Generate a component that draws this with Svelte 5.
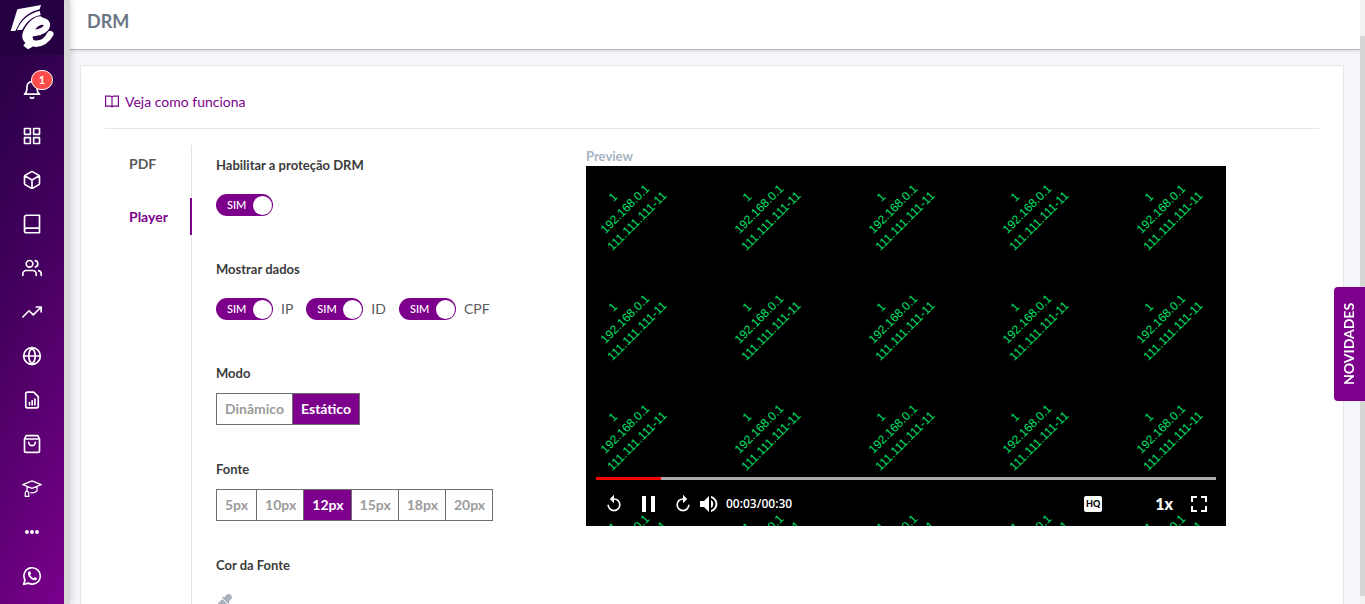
<script lang="ts">
  type Option = { id: string; label: string; checked: boolean };

  const menu = [
    'Painel',
    'Produtos',
    'Cursos',
    'Usuários',
    'Vendas',
    'Site',
    'Relatórios',
    'Loja',
    'Alunos',
    'Mais',
    'WhatsApp',
  ];

  const fontSizes = ['5px', '10px', '12px', '15px', '18px', '20px'];
  const modes = ['Dinâmico', 'Estático'];

  let protection = $state({ checked: true });
  let mode = $state('Estático');
  let fontSize = $state('12px');
  let shown = $state<Option[]>([
    { id: 'ip', label: 'IP', checked: true },
    { id: 'id', label: 'ID', checked: true },
    { id: 'cpf', label: 'CPF', checked: true },
  ]);

  const current = 3;
  const duration = 30;
  const progress = 10.5;

  // watermark grid, one stamp per cell
  const stamps = Array.from({ length: 20 }, (_, i) => ({
    x: 39 + (i % 5) * 134,
    y: 43 + Math.floor(i / 5) * 110,
  }));

  function time(seconds: number) {
    return '00:' + String(seconds).padStart(2, '0');
  }
</script>

{#snippet toggle(id: string, option: { checked: boolean })}
  <span class="switch">
    <input type="checkbox" {id} bind:checked={option.checked} />
    <span class="track"><span>{option.checked ? 'SIM' : 'NÃO'}</span></span>
  </span>
{/snippet}

<div class="app">
  <nav class="sidebar">
    <a class="logo" href="#inicio" aria-label="Início">
      <svg viewBox="0 0 156 150" width="52" height="50">
        <path d="M34 22 L105 9 L101 22 C75 28 52 43 39 66 L28 87 L14 87 Z" />
        <path d="M101 26 L104 39 C80 43 62 58 48 84 L33 84 C46 52 70 34 101 26 Z" />
        <path d="M52 88 C64 62 84 43 104 43 L128 58 L90 66 L72 98 L80 134 L66 142 L52 131 L58 122 C48 114 46 102 52 88 Z" />
        <path
          class="letter"
          d="M84 93 C106 92 124 80 123 67 C118 54 96 56 82 74 C66 96 66 122 86 125 C106 127 124 114 133 96"
        />
      </svg>
    </a>
    <a class="bell" href="#notificacoes" aria-label="Notificações">
      <svg viewBox="0 0 24 24" width="20" height="20">
        <path d="M18 8A6 6 0 0 0 6 8c0 7-3 9-3 9h18s-3-2-3-9M10 21c1 1.300 3 1.300 4 0" />
      </svg>
      <span class="badge">1</span>
    </a>
    {#each menu as item, i}
      <a href="#{item.toLowerCase()}" aria-label={item}>
        <svg viewBox="0 0 24 24" width="20" height="20">
          {#if i === 0}
            <path d="M3 3h7v7H3zM14 3h7v7h-7zM14 14h7v7h-7zM3 14h7v7H3z" />
          {:else if i === 1}
            <path d="M21 16V8a2 2 0 0 0-1-1.730l-7-4a2 2 0 0 0-2 0l-7 4A2 2 0 0 0 3 8v8a2 2 0 0 0 1 1.730l7 4a2 2 0 0 0 2 0l7-4A2 2 0 0 0 21 16zM3.270 6.960L12 12l8.730-5.040M12 22V12" />
          {:else if i === 2}
            <path d="M3 19.500A2.500 2.500 0 0 1 5.500 17H21M5.500 1.500H21v21H5.500A2.500 2.500 0 0 1 3 20V4a2.500 2.500 0 0 1 2.500-2.500z" />
          {:else if i === 3}
            <path d="M17 21v-2a4 4 0 0 0-4-4H5a4 4 0 0 0-4 4v2M23 21v-2a4 4 0 0 0-3-3.870M16 3.130a4 4 0 0 1 0 7.750" />
            <circle cx="9" cy="7" r="4" />
          {:else if i === 4}
            <path d="M23 6l-9.500 9.500-5-5L1 18M17 6h6v6" />
          {:else if i === 5}
            <circle cx="12" cy="12" r="10" />
            <path d="M2 12h20M12 2a15.300 15.300 0 0 1 4 10 15.300 15.300 0 0 1-4 10 15.300 15.300 0 0 1-4-10 15.300 15.300 0 0 1 4-10z" />
          {:else if i === 6}
            <path d="M14 2.500H6.500a2 2 0 0 0-2 2v15a2 2 0 0 0 2 2h11a2 2 0 0 0 2-2V8zM9 18v-3M12.200 18v-5M15.500 18v-7" />
          {:else if i === 7}
            <path d="M5 2h14l2 4v14a2 2 0 0 1-2 2H5a2 2 0 0 1-2-2V6zM3 6h18M16 10a4 4 0 0 1-8 0" />
          {:else if i === 8}
            <path class="thin" d="M1 8l11-4.500L23 8l-11 4.500zM6 10.500V16M18 10.500v5c-1.500 2-5 2.500-8 2.200M6 15.500c-2 0-2.200 2-2.200 6.500h4.400c0-4.500-.2-6.500-2.200-6.500z" />
          {:else if i === 9}
            <g class="solid">
              <circle cx="6" cy="12" r="2.300" />
              <circle cx="12" cy="12" r="2.300" />
              <circle cx="18" cy="12" r="2.300" />
            </g>
          {:else}
            <path d="M2 22l1.600-5.200a9.800 9.800 0 1 1 3.700 3.700z" />
            <path class="solid" d="M8.500 6.500c-2 1-1.800 3.500-.4 5.700 1.700 2.700 4.400 5 7.200 5 1.500 0 2.700-1 2.700-2.600l-2.800-1.500-1.500 1.500c-1.700-.6-3.200-2.200-3.900-3.700l1.100-1.500-1-2.700c-.3-.4-.9-.4-1.400-.2z" />
          {/if}
        </svg>
      </a>
    {/each}
  </nav>

  <div class="page">
    <header>
      <h1>DRM</h1>
    </header>

    <main>
      <a class="help" href="#como-funciona">
        <svg viewBox="0 0 24 24" width="14" height="14">
          <path d="M1 2h8a3 3 0 0 1 3 3v16a2.500 2.500 0 0 0-2.500-2H1zM23 2h-8a3 3 0 0 0-3 3v16a2.500 2.500 0 0 1 2.500-2H23z" />
        </svg>
        Veja como funciona
      </a>

      <div class="content">
        <nav class="tabs">
          <a href="#pdf">PDF</a>
          <a class="active" href="#player">Player</a>
        </nav>

        <form class="settings">
          <section>
            <h2><label for="drm">Habilitar a proteção DRM</label></h2>
            <div class="switches">
              {@render toggle('drm', protection)}
            </div>
          </section>

          <section>
            <h2>Mostrar dados</h2>
            <div class="switches">
              {#each shown as option}
                {@render toggle(option.id, option)}
                <label for={option.id}>{option.label}</label>
              {/each}
            </div>
          </section>

          <section>
            <h2>Modo</h2>
            <div class="segments">
              {#each modes as item}
                <button type="button" class:selected={mode === item} onclick={() => (mode = item)}>{item}</button>
              {/each}
            </div>
          </section>

          <section>
            <h2>Fonte</h2>
            <div class="segments sizes">
              {#each fontSizes as size}
                <button type="button" class:selected={fontSize === size} onclick={() => (fontSize = size)}>{size}</button>
              {/each}
            </div>
          </section>

          <section>
            <h2>Cor da Fonte</h2>
            <button type="button" class="picker" aria-label="Escolher cor">
              <svg viewBox="0 0 16 16" width="16" height="16">
                <path d="M15 1c-1.400-1.400-3.500-1.200-4.800.2L8.600 3l-.9-.8-1.500 1.500 6 6 1.500-1.500-.8-.9L14.800 5.700c1.400-1.300 1.500-3.400.2-4.700zM6.300 5L2 9.300l-.5 2.700L0 14.500 1.500 16 4 14.500l2.700-.5L11 9.700z" />
              </svg>
            </button>
          </section>
        </form>

        <div class="preview">
          <h3>Preview</h3>
          <div class="player">
            <svg class="watermark" viewBox="0 0 640 360" width="640" height="360">
              {#each stamps as stamp}
                <g transform="translate({stamp.x} {stamp.y}) rotate(-45)">
                  <text y="-13">1</text>
                  <text y="4">192.168.0.1</text>
                  <text y="21">111.111.111-11</text>
                </g>
              {/each}
            </svg>

            <div class="overlay">
              <div class="progress"><div style="width: {progress}%"></div></div>
              <div class="controls">
                <button type="button" aria-label="Voltar">
                  <svg viewBox="0 0 24 24" width="20" height="20">
                    <path d="M12 5V1L7 6l5 5V7a6 6 0 1 1-6 6H4a8 8 0 1 0 8-8z" />
                  </svg>
                </button>
                <button type="button" class="pause" aria-label="Pausar">
                  <svg viewBox="0 0 13 16" width="13" height="16"><path d="M0 0h4v16H0zM9 0h4v16H9z" /></svg>
                </button>
                <button type="button" aria-label="Avançar">
                  <svg viewBox="0 0 24 24" width="20" height="20">
                    <path d="M12 5V1l5 5-5 5V7a6 6 0 1 0 6 6h2a8 8 0 1 1-8-8z" />
                  </svg>
                </button>
                <button type="button" class="volume" aria-label="Volume">
                  <svg viewBox="0 0 18 18" width="18" height="18">
                    <path d="M0 6v6h4l5 5V1L4 6zM11 5v8c3-1.500 3-6.500 0-8zM11 1v2c6 2 6 10 0 12v2c8.500-2.500 8.500-13.500 0-16z" />
                  </svg>
                </button>
                <span class="time">{time(current)}/{time(duration)}</span>
                <button type="button" class="quality" aria-label="Qualidade">HQ</button>
                <button type="button" class="speed">1x</button>
                <button type="button" aria-label="Tela cheia">
                  <svg viewBox="0 0 16 16" width="16" height="16">
                    <path d="M0 0h6v2H2v4H0zM10 0h6v6h-2V2h-4zM0 10h2v4h4v2H0zM14 10h2v6h-6v-2h4z" />
                  </svg>
                </button>
              </div>
            </div>
          </div>
        </div>
      </div>
    </main>
  </div>

  <div class="scrollbar"><div></div></div>
  <button type="button" class="news">NOVIDADES</button>
</div>

<style>
  :global(body) {
    overflow: hidden;
    background: #f4f6fb;
  }

  .app {
    display: flex;
    height: 100vh;
    overflow: hidden;
    font-family: Lato, sans-serif;
    font-size: 14px;
    line-height: 20px;
    color: #5a5a5a;
  }

  .app * {
    box-sizing: border-box;
  }

  a {
    text-decoration: none;
  }

  button {
    padding: 0;
    border: 0;
    background: none;
    font: inherit;
    cursor: pointer;
  }

  h1,
  h2,
  h3 {
    margin: 0;
  }

  svg {
    display: block;
  }

  .sidebar {
    flex: none;
    width: 70px;
    border-right: 6px solid #d9d8d6;
    background: linear-gradient(118deg, #240042 0%, #44005e 45%, #7a008c 100%) padding-box;
    box-shadow: 0 0 8px rgba(0, 0, 0, 0.2);
    z-index: 1;
  }

  .sidebar a {
    position: relative;
    display: flex;
    align-items: center;
    justify-content: center;
    height: 44px;
  }

  .sidebar a.logo {
    height: 55px;
    padding-bottom: 1px;
    background: #240042;
  }

  .sidebar a.bell {
    height: 59px;
    padding-top: 10px;
  }

  .sidebar svg {
    fill: none;
    stroke: #fff;
    stroke-width: 2;
    stroke-linecap: round;
    stroke-linejoin: round;
  }

  .sidebar .logo svg,
  .sidebar .solid {
    fill: #fff;
    stroke: none;
  }

  .sidebar .letter {
    fill: none;
    stroke: #fff;
    stroke-width: 19;
  }

  .sidebar .thin {
    stroke-width: 1.500;
  }

  .badge {
    position: absolute;
    top: 15px;
    left: 31px;
    width: 22px;
    height: 20px;
    border: 1px solid #fff;
    border-radius: 10px;
    background: #ff4b4b;
    color: #fff;
    font-size: 11px;
    font-weight: 700;
    line-height: 18px;
    text-align: center;
  }

  .page {
    flex: 1;
    min-width: 0;
  }

  header {
    height: 50px;
    padding: 9px 17px;
    border-bottom: 1px solid #b4b7ba;
    background: #fff;
    box-shadow: 0 1px 4px rgba(0, 0, 0, 0.12);
  }

  h1 {
    color: #6a7684;
    font-size: 18px;
    font-weight: 700;
    line-height: 24px;
  }

  main {
    margin: 15px 16px 0 10px;
    padding: 24px;
    border: 1px solid #e6e7e9;
    background: #fff;
  }

  .help {
    display: flex;
    align-items: center;
    gap: 6px;
    height: 39px;
    padding-bottom: 14px;
    border-bottom: 1px solid #e6e7e9;
    color: #7c008c;
  }

  .help svg {
    fill: none;
    stroke: #7c008c;
    stroke-width: 2;
  }

  .content {
    display: flex;
    padding-top: 16px;
  }

  .tabs {
    display: flex;
    flex: none;
    flex-direction: column;
    gap: 16px;
    width: 87px;
    border-right: 1px solid #e2e3e5;
  }

  .tabs a {
    height: 37px;
    margin-right: -1px;
    padding-left: 24px;
    color: #5a5a5a;
    font-weight: 700;
    line-height: 38px;
  }

  .tabs .active {
    border-right: 2px solid #7c008c;
    color: #7c008c;
  }

  .settings {
    flex: none;
    width: 394px;
    padding: 10px 0 0 24px;
  }

  section {
    margin-bottom: 34px;
  }

  h2 {
    margin-bottom: 10px;
    color: #3b3b3b;
    font-size: 13px;
    font-weight: 700;
    line-height: 20px;
  }

  .switches {
    display: flex;
    align-items: center;
    height: 40px;
  }

  .switches label {
    padding: 0 13px 0 8px;
  }

  .switch {
    position: relative;
    width: 57px;
    height: 22px;
  }

  .switch input {
    position: absolute;
    inset: 0;
    width: 100%;
    height: 100%;
    margin: 0;
    opacity: 0;
    cursor: pointer;
  }

  .track {
    display: flex;
    align-items: center;
    justify-content: space-between;
    height: 22px;
    padding: 0 1px 0 11px;
    border-radius: 11px;
    background: #7c008c;
    color: #fff;
    font-size: 11px;
    font-weight: 500;
  }

  .track::after {
    content: '';
    width: 19px;
    height: 19px;
    border-radius: 50%;
    background: #fff;
  }

  input:not(:checked) + .track {
    flex-direction: row-reverse;
    padding: 0 8px 0 1px;
    background: #a5adb7;
  }

  .segments {
    display: inline-flex;
    border: 1px solid #6f6f6f;
    vertical-align: top;
  }

  .segments button {
    height: 30px;
    padding: 0 8px;
    color: #9b9b9b;
    font-weight: 700;
  }

  .segments button + button {
    border-left: 1px solid #6f6f6f;
  }

  .sizes button + button {
    padding-right: 7px;
  }

  .segments .selected {
    background: #7c008c;
    color: #fff;
  }

  .picker {
    margin-top: 9px;
    fill: #a7b0bc;
  }

  .preview {
    flex: 0 1 640px;
    min-width: 0;
  }

  h3 {
    padding-top: 1px;
    color: #a7b3c2;
    font-size: 13px;
    font-weight: 700;
    line-height: 20px;
  }

  .player {
    position: relative;
    height: 360px;
    overflow: hidden;
    background: #000;
  }

  .watermark text {
    fill: #00e068;
    font-family: 'Liberation Sans', Arial, sans-serif;
    font-size: 12px;
    text-anchor: middle;
  }

  .overlay {
    position: absolute;
    right: 10px;
    bottom: 0;
    left: 10px;
    color: #fff;
  }

  .progress {
    height: 3px;
    background: #a9a9a9;
  }

  .progress div {
    height: 3px;
    background: #f00;
  }

  .controls {
    display: flex;
    align-items: center;
    height: 46px;
    padding: 2px 9px 0 8px;
  }

  .controls button {
    color: #fff;
    fill: #fff;
  }

  .controls .pause {
    margin: 0 18px;
  }

  .controls .volume {
    margin: 0 8px 0 7px;
  }

  .time {
    flex: 1;
    font-family: 'Open Sans', sans-serif;
    font-size: 12px;
    font-weight: 600;
  }

  .controls .quality {
    width: 18px;
    height: 16px;
    margin-right: 53px;
    border-radius: 2px;
    background: #fff;
    color: #000;
    font-size: 9px;
    font-weight: 900;
    line-height: 16px;
  }

  .controls .speed {
    margin-right: 18px;
    font-size: 16px;
    font-weight: 900;
  }

  .scrollbar {
    flex: none;
    width: 5px;
    height: 100vh;
    padding: 36px 0 8px;
    background: #f3f3f3;
  }

  .scrollbar div {
    height: 100%;
    background: #d6d6d4;
  }

  .news {
    position: fixed;
    top: 287px;
    right: 0;
    width: 31px;
    height: 114px;
    border-radius: 0 4px 4px 0;
    background: #7c008c;
    color: #fff;
    font-size: 14px;
    font-weight: 700;
    writing-mode: vertical-rl;
    transform: rotate(180deg);
  }
</style>
